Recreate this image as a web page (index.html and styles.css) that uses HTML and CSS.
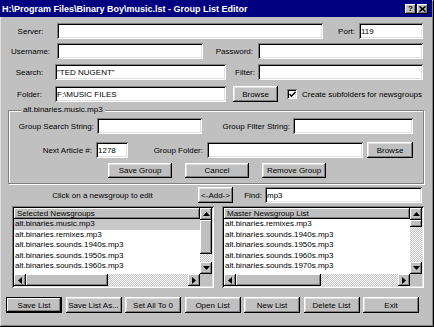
FILE: index.html
```html
<!DOCTYPE html>
<html lang="en">
<head>
  <meta charset="UTF-8">
  <meta name="viewport" content="width=device-width, initial-scale=1.0">
  <title>Group List Editor</title>
  <link rel="stylesheet" href="styles.css">
</head>
<body>
  <div class="window">
    <div class="titlebar">
      <span class="title">H:\Program Files\Binary Boy\music.lst - Group List Editor</span>
      <div class="title-buttons">
        <span class="tbtn">?</span>
        <span class="tbtn">
          <svg width="7" height="6" viewBox="0 0 7 6"><path d="M0.5 0.5 L6.5 5.5 M6.5 0.5 L0.5 5.5" stroke="#000" stroke-width="1.6"/></svg>
        </span>
      </div>
    </div>

    <div class="row row-1">
      <label class="lbl lbl-main w53">Server:</label>
      <input class="field w-server" type="text">
      <label class="lbl lbl-right w-port-lbl">Port:</label>
      <input class="field w-port" type="text" value="119">
    </div>

    <div class="row row-2">
      <label class="lbl lbl-main w53">Username:</label>
      <input class="field w-user" type="text">
      <label class="lbl lbl-right w-pass-lbl">Password:</label>
      <input class="field w-right" type="password">
    </div>

    <div class="row row-3">
      <label class="lbl lbl-main w51">Search:</label>
      <input class="field w-search" type="text" value="&quot;TED NUGENT&quot;">
      <label class="lbl lbl-right w-filter-lbl">Filter:</label>
      <input class="field w-right" type="text">
    </div>

    <div class="row row-4">
      <label class="lbl lbl-main w51">Folder:</label>
      <input class="field w-search" type="text" value="F:\MUSIC FILES">
      <button class="btn btn-browse">Browse</button>
      <span class="checkbox">
        <svg width="7" height="7" viewBox="0 0 7 7"><polyline points="0.5,3 2.5,5.2 6.5,1" fill="none" stroke="#000" stroke-width="1.5"/></svg>
      </span>
      <span class="check-text">Create subfolders for newsgroups</span>
    </div>

    <fieldset class="group">
      <legend>alt.binaries.music.mp3</legend>
      <div class="row row-a">
        <label class="lbl lbl-right w-gss">Group Search String:</label>
        <input class="field w-gss-in" type="text">
        <label class="lbl lbl-right w-gfs">Group Filter String:</label>
        <input class="field w-gfs-in" type="text">
      </div>
      <div class="row row-b">
        <label class="lbl lbl-right w-next">Next Article #:</label>
        <input class="field w-next-in" type="text" value="1278">
        <label class="lbl lbl-right w-gf">Group Folder:</label>
        <input class="field w-gf-in" type="text">
        <button class="btn btn-browse2">Browse</button>
      </div>
      <div class="row row-c">
        <button class="btn btn-group first">Save Group</button>
        <button class="btn btn-group">Cancel</button>
        <button class="btn btn-group">Remove Group</button>
      </div>
    </fieldset>

    <div class="row row-find">
      <span class="lbl hint">Click on a newsgroup to edit</span>
      <button class="btn btn-add">&lt;-Add-&gt;</button>
      <label class="lbl lbl-right w-find">Find:</label>
      <input class="field w-find-in" type="text" value="mp3">
    </div>

    <div class="lists">
      <div class="listbox">
        <div class="list-main">
          <div class="list-header">Selected Newsgroups</div>
          <div class="list-items">
            <div class="item selected">alt.binaries.music.mp3</div>
            <div class="item">alt.binaries.remixes.mp3</div>
            <div class="item">alt.binaries.sounds.1940s.mp3</div>
            <div class="item">alt.binaries.sounds.1950s.mp3</div>
            <div class="item">alt.binaries.sounds.1960s.mp3</div>
            <div class="item">alt.binaries.sounds.1970s.mp3</div>
          </div>
        </div>
        <div class="vscroll">
          <div class="sb-btn"><svg width="7" height="4" viewBox="0 0 7 4"><polygon points="3.5,0 7,4 0,4"/></svg></div>
          <div class="sb-track"><div class="vthumb big"></div></div>
          <div class="sb-btn"><svg width="7" height="4" viewBox="0 0 7 4"><polygon points="0,0 7,0 3.5,4"/></svg></div>
        </div>
        <div class="hscroll">
          <div class="sb-btn"><svg width="4" height="7" viewBox="0 0 4 7"><polygon points="4,0 4,7 0,3.5"/></svg></div>
          <div class="sb-track"><div class="hthumb"></div></div>
          <div class="sb-btn"><svg width="4" height="7" viewBox="0 0 4 7"><polygon points="0,0 4,3.5 0,7"/></svg></div>
        </div>
        <div class="sb-corner"></div>
      </div>

      <div class="listbox">
        <div class="list-main">
          <div class="list-header">Master Newsgroup List</div>
          <div class="list-items">
            <div class="item">alt.binaries.remixes.mp3</div>
            <div class="item">alt.binaries.sounds.1940s.mp3</div>
            <div class="item">alt.binaries.sounds.1950s.mp3</div>
            <div class="item">alt.binaries.sounds.1960s.mp3</div>
            <div class="item">alt.binaries.sounds.1970s.mp3</div>
            <div class="item">alt.binaries.sounds.1980s.mp3</div>
          </div>
        </div>
        <div class="vscroll">
          <div class="sb-btn"><svg width="7" height="4" viewBox="0 0 7 4"><polygon points="3.5,0 7,4 0,4"/></svg></div>
          <div class="sb-track"><div class="vthumb small"></div></div>
          <div class="sb-btn"><svg width="7" height="4" viewBox="0 0 7 4"><polygon points="0,0 7,0 3.5,4"/></svg></div>
        </div>
        <div class="hscroll">
          <div class="sb-btn"><svg width="4" height="7" viewBox="0 0 4 7"><polygon points="4,0 4,7 0,3.5"/></svg></div>
          <div class="sb-track"><div class="hthumb wide"></div></div>
          <div class="sb-btn"><svg width="4" height="7" viewBox="0 0 4 7"><polygon points="0,0 4,3.5 0,7"/></svg></div>
        </div>
        <div class="sb-corner"></div>
      </div>
    </div>

    <div class="bottom-buttons">
      <button class="btn default">Save List</button>
      <button class="btn">Save List As...</button>
      <button class="btn">Set All To 0</button>
      <button class="btn">Open List</button>
      <button class="btn">New List</button>
      <button class="btn">Delete List</button>
      <button class="btn">Exit</button>
    </div>
  </div>
</body>
</html>
```

FILE: styles.css
```css
* {
  box-sizing: border-box;
}
body {
  margin: 0;
  background: #c0c0c0;
  font-family: "Liberation Sans", Arial, sans-serif;
  font-size: 8px;
  color: #000;
}
.window {
  width: 434px;
  height: 327px;
  background: #c0c0c0;
  box-shadow: inset -1px -1px #000, inset 1px 1px #dfdfdf, inset -2px -2px #808080;
  overflow: hidden;
}

/* title bar */
.titlebar {
  height: 17px;
  width: 432px;
  background: #000080;
  display: flex;
  align-items: center;
  justify-content: space-between;
  padding-left: 2px;
}
.title {
  color: #fff;
  font-weight: bold;
  font-size: 9px;
  white-space: nowrap;
}
.title-buttons {
  display: flex;
  gap: 1px;
  margin-right: 4px;
}
.tbtn {
  width: 11px;
  height: 10px;
  background: #c0c0c0;
  box-shadow: inset -1px -1px #000, inset 1px 1px #fff, inset -2px -2px #808080;
  display: flex;
  align-items: center;
  justify-content: center;
  font-weight: bold;
  font-size: 8px;
  line-height: 1;
}

/* common controls */
.row {
  display: flex;
  align-items: center;
  height: 16px;
}
.lbl {
  white-space: nowrap;
  flex: none;
}
.lbl-main {
  margin-left: 4px;
  text-align: center;
}
.lbl-right {
  text-align: right;
}
.field {
  font: inherit;
  height: 16px;
  border: 0;
  padding: 0 2px;
  background: #fff;
  color: #000;
  outline: none;
  flex: none;
  box-shadow: inset 1px 1px #808080, inset -1px -1px #fff, inset 2px 2px #000, inset -2px -2px #dfdfdf;
}
.btn {
  font: inherit;
  height: 16px;
  border: 0;
  padding: 0;
  background: #c0c0c0;
  color: #000;
  flex: none;
  box-shadow: inset -1px -1px #000, inset 1px 1px #fff, inset -2px -2px #808080, inset 2px 2px #dfdfdf;
}
.btn.default {
  border: 1px solid #000;
  box-shadow: inset -1px -1px #000, inset 1px 1px #fff, inset -2px -2px #808080;
}

/* top rows */
.row-1 { margin-top: 6px; }
.row-2 { margin-top: 4px; }
.row-3 { margin-top: 5px; }
.row-4 { margin-top: 6px; }
.w53 { width: 53px; }
.w51 { width: 51px; }
.w-server { width: 266px; }
.w-port-lbl { width: 36px; padding-right: 4px; }
.w-port { width: 64px; }
.w-user { width: 146px; }
.w-pass-lbl { width: 55px; padding-right: 5px; }
.w-right { width: 165px; }
.w-search { width: 171px; }
.w-filter-lbl { width: 32px; padding-right: 3px; }
.btn-browse {
  width: 45px;
  margin-left: 7px;
}
.checkbox {
  width: 10px;
  height: 10px;
  margin-left: 9px;
  background: #fff;
  box-shadow: inset 1px 1px #808080, inset -1px -1px #fff, inset 2px 2px #000, inset -2px -2px #dfdfdf;
  display: flex;
  align-items: center;
  justify-content: center;
}
.check-text {
  margin-left: 5px;
  white-space: nowrap;
}

/* group box */
.group {
  margin: 3px 0 0 8px;
  width: 416px;
  padding: 3px 0 5px 0;
  border: 1px solid #808080;
  box-shadow: inset 1px 1px #fff, 1px 1px #fff;
}
.group legend {
  margin-left: 12px;
  padding: 0 2px;
  line-height: 10px;
  background: #c0c0c0;
}
.w-gss { width: 88px; padding-right: 3px; }
.w-gss-in { width: 105px; }
.w-gfs { width: 91px; padding-right: 3px; }
.w-gfs-in { width: 120px; }
.row-b { margin-top: 8px; }
.w-next { width: 87px; padding-right: 4px; }
.w-next-in { width: 32px; }
.w-gf { width: 79px; padding-right: 4px; }
.w-gf-in { width: 156px; }
.btn-browse2 {
  width: 46px;
  margin-left: 4px;
}
.row-c {
  margin-top: 5px;
  height: 15px;
}
.btn-group {
  width: 64px;
  height: 15px;
  margin-left: 13px;
}
.btn-group.first {
  margin-left: 99px;
}

/* find row */
.row-find { margin-top: 3px; }
.hint {
  width: 181px;
  margin-left: 12px;
  text-align: center;
}
.btn-add {
  width: 35px;
  margin-left: 5px;
}
.w-find { width: 32px; padding-right: 3px; }
.w-find-in { width: 157px; }

/* list boxes */
.lists {
  display: flex;
  gap: 8px;
  margin: 3px 0 0 12px;
}
.listbox {
  width: 202px;
  height: 82px;
  padding: 2px;
  background: #fff;
  box-shadow: inset 1px 1px #808080, inset -1px -1px #fff, inset 2px 2px #000, inset -2px -2px #dfdfdf;
  display: grid;
  grid-template-columns: 1fr 12px;
  grid-template-rows: 1fr 12px;
  overflow: hidden;
}
.list-main {
  overflow: hidden;
  min-width: 0;
}
.list-header {
  height: 11px;
  line-height: 11px;
  padding-left: 3px;
  background: #c0c0c0;
  box-shadow: inset -1px -1px #000, inset 1px 1px #fff, inset -2px -2px #808080;
  white-space: nowrap;
}
.item {
  height: 10.5px;
  line-height: 10.5px;
  padding-left: 1px;
  white-space: nowrap;
}
.item.selected {
  background: #c8c8c8;
}
.vscroll {
  display: flex;
  flex-direction: column;
}
.hscroll {
  display: flex;
}
.sb-btn {
  width: 12px;
  height: 12px;
  flex: none;
  background: #c0c0c0;
  box-shadow: inset -1px -1px #000, inset 1px 1px #fff, inset -2px -2px #808080;
  display: flex;
  align-items: center;
  justify-content: center;
}
.sb-btn svg {
  fill: #000;
}
.sb-track {
  flex: 1;
  background: repeating-conic-gradient(#c0c0c0 0 25%, #fff 0 50%) 0 0 / 2px 2px;
}
.vthumb {
  width: 12px;
  background: #c0c0c0;
  box-shadow: inset -1px -1px #000, inset 1px 1px #fff, inset -2px -2px #808080;
}
.vthumb.big { height: 34px; }
.vthumb.small { height: 7px; }
.hthumb {
  width: 82px;
  height: 12px;
  background: #c0c0c0;
  box-shadow: inset -1px -1px #000, inset 1px 1px #fff, inset -2px -2px #808080;
}
.hthumb.wide { width: 85px; }
.sb-corner {
  background: #c0c0c0;
}

/* bottom buttons */
.bottom-buttons {
  display: grid;
  grid-template-columns: repeat(7, 56px);
  column-gap: 3.5px;
  margin: 9px 0 0 6px;
}
```
